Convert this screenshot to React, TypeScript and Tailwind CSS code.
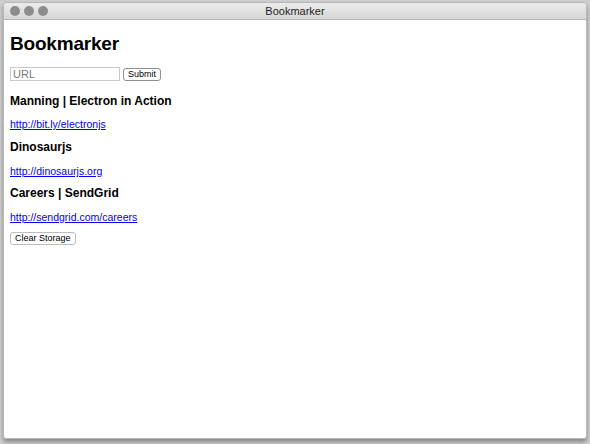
import React from "react";

export default function App() {
  const font = { fontFamily: "'Liberation Sans', Arial, sans-serif" };
  return (
    <div className="w-[590px] h-[444px] bg-[#cfcfcf] pt-[2px] px-[3px] overflow-hidden" style={font}>
      <div className="h-[437px] bg-white rounded-t-[4px] rounded-b-[3px] border border-[#b8b8b8] shadow-[0_3px_4px_rgba(0,0,0,0.35)] flex flex-col overflow-hidden">
        <div className="h-[17px] shrink-0 bg-gradient-to-b from-[#ececec] to-[#d6d6d6] border-b border-[#b5b5b5] relative flex items-center justify-center">
          <div className="absolute left-[6px] top-[3px] flex gap-[4px]">
            <div className="w-[10px] h-[10px] rounded-full bg-[#8c8c8c]" />
            <div className="w-[10px] h-[10px] rounded-full bg-[#8c8c8c]" />
            <div className="w-[10px] h-[10px] rounded-full bg-[#8c8c8c]" />
          </div>
          <span className="text-[11px] text-[#1e1e1e] leading-none">Bookmarker</span>
        </div>
        <div className="pl-[6px] pt-[12px] text-black">
          <h1 className="text-[19px] font-bold leading-[24px] tracking-[-0.2px]">Bookmarker</h1>
          <form className="mt-[11px] flex items-center gap-[3px]">
            <input
              placeholder="URL"
              className="w-[110px] h-[14px] border border-[#c9c9c9] px-[2px] text-[11px] placeholder:text-[#7a7a7a] outline-none"
            />
            <button type="button" className="h-[13px] px-[4px] text-[9px] font-medium border border-[#8e8e8e] rounded-[3px] bg-white leading-none">
              Submit
            </button>
          </form>
          <div className="mt-[13px]">
            <h3 className="text-[12px] font-bold leading-[15px]">Manning | Electron in Action</h3>
            <a href="#" className="block mt-[9px] text-[10.5px] leading-[13px] text-[#0000ee] underline">http://bit.ly/electronjs</a>
          </div>
          <div className="mt-[9px]">
            <h3 className="text-[12px] font-bold leading-[15px]">Dinosaurjs</h3>
            <a href="#" className="block mt-[10px] text-[10.5px] leading-[13px] text-[#0000ee] underline">http://dinosaurjs.org</a>
          </div>
          <div className="mt-[8px]">
            <h3 className="text-[12px] font-bold leading-[15px]">Careers | SendGrid</h3>
            <a href="#" className="block mt-[10px] text-[10.5px] leading-[13px] text-[#0000ee] underline">http://sendgrid.com/careers</a>
          </div>
          <button type="button" className="mt-[8px] h-[13px] px-[4px] text-[9px] font-medium border border-[#bdbdbd] rounded-[3px] bg-white leading-none">
            Clear Storage
          </button>
        </div>
      </div>
    </div>
  );
}
